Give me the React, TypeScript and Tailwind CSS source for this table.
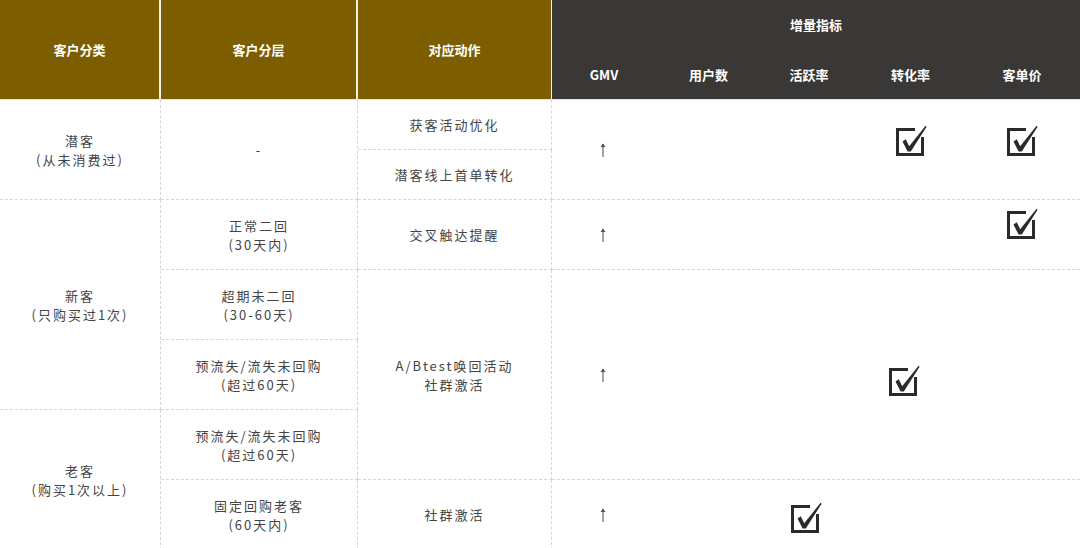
import type { ReactNode } from "react"

const metrics = ["GMV", "用户数", "活跃率", "转化率", "客单价"]

// 每个指标列的宽度，和表头对齐
const metricCols = "grid grid-cols-[104px_105px_96px_107px_116px]"

function CheckBox({ className = "" }: { className?: string }) {
  return (
    <svg width="34" height="34" viewBox="0 0 34 34" className={className}>
      <path d="M21 5.5 H3.5 V30.5 H28.5 V13" fill="none" stroke="#2a2a2a" strokeWidth="3" />
      <polygon
        points="8.5,17.5 11.8,15.3 15.2,22.2 31.6,1.8 32.6,2.8 16.8,27.6 13.6,27.6"
        fill="#2a2a2a"
      />
    </svg>
  )
}

function Up() {
  return (
    <svg width="8" height="16" viewBox="0 0 8 16" className="mr-[3px]">
      <path d="M4 2 V15" stroke="#666" strokeWidth="1.2" />
      <path d="M1.5 5 L4 1.5 L6.5 5 Z" fill="#555" />
    </svg>
  )
}

function Cell({ className = "", children }: { className?: string; children?: ReactNode }) {
  return (
    <div
      className={
        "flex flex-col items-center justify-center border-r border-b border-dashed border-[#d6d6d6] text-center " +
        className
      }
    >
      {children}
    </div>
  )
}

// 指标区的一行（只有横向虚线）
function MetricRow({
  className,
  checks,
  checkClass = "",
}: {
  className: string
  checks: number[]
  checkClass?: string
}) {
  return (
    <div className={"col-[4/-1] border-b border-dashed border-[#d6d6d6] " + metricCols + " " + className}>
      {metrics.map((m, i) => (
        <div key={m} className="flex items-center justify-center">
          {i === 0 && <Up />}
          {checks.includes(i) && <CheckBox className={checkClass} />}
        </div>
      ))}
    </div>
  )
}

export default function App() {
  return (
    <div className="w-[1080px] h-[548px] overflow-hidden bg-white font-['Noto_Sans_CJK_SC','Liberation_Sans',sans-serif]">
      {/* 表头 */}
      <div className="grid grid-cols-[161px_197px_194px_528px] h-[100px] border-b border-[#ece6d8] text-[13px] font-bold text-white">
        <div className="flex items-center justify-center bg-[#7c5e00] border-r-2 border-[#f4f0e6]">客户分类</div>
        <div className="flex items-center justify-center bg-[#7c5e00] border-r-2 border-[#f4f0e6]">客户分层</div>
        <div className="flex items-center justify-center bg-[#7c5e00] border-r border-[#f4f0e6]">对应动作</div>
        <div className="flex flex-col bg-[#3a3836]">
          <div className="flex h-[50px] items-center justify-center">增量指标</div>
          <div className={metricCols + " h-[49px] items-center"}>
            {metrics.map((m) => (
              <div key={m} className="text-center">
                {m}
              </div>
            ))}
          </div>
        </div>
      </div>

      {/* 表体 */}
      <div className="grid grid-cols-[161px_197px_194px_104px_105px_96px_107px_116px] grid-rows-[50px_50px_70px_70px_70px_70px_70px] text-[13px] leading-[19px] tracking-[2px] text-[#444]">
        <Cell className="col-[1] row-[1/3]">
          <div>潜客</div>
          <div>(从未消费过)</div>
        </Cell>
        <Cell className="col-[2] row-[1/3]">-</Cell>
        <Cell className="col-[3] row-[1]">获客活动优化</Cell>
        <Cell className="col-[3] row-[2]">潜客线上首单转化</Cell>
        <MetricRow className="row-[1/3]" checks={[3, 4]} checkClass="mb-[18px]" />

        <Cell className="col-[1] row-[3/6]">
          <div>新客</div>
          <div>(只购买过1次)</div>
        </Cell>
        <Cell className="col-[2] row-[3]">
          <div>正常二回</div>
          <div>(30天内)</div>
        </Cell>
        <Cell className="col-[3] row-[3]">交叉触达提醒</Cell>
        <MetricRow className="row-[3]" checks={[4]} checkClass="mb-[22px]" />

        <Cell className="col-[2] row-[4]">
          <div>超期未二回</div>
          <div>(30-60天)</div>
        </Cell>
        <Cell className="col-[2] row-[5]">
          <div>预流失/流失未回购</div>
          <div>(超过60天)</div>
        </Cell>
        <Cell className="col-[3] row-[4/7]">
          <div>A/Btest唤回活动</div>
          <div>社群激活</div>
        </Cell>
        <MetricRow className="row-[4/7]" checks={[3]} checkClass="mt-[12px] mr-[14px]" />

        <Cell className="col-[1] row-[6/8]">
          <div>老客</div>
          <div>(购买1次以上)</div>
        </Cell>
        <Cell className="col-[2] row-[6]">
          <div>预流失/流失未回购</div>
          <div>(超过60天)</div>
        </Cell>
        <Cell className="col-[2] row-[7]">
          <div>固定回购老客</div>
          <div>(60天内)</div>
        </Cell>
        <Cell className="col-[3] row-[7]">社群激活</Cell>
        <MetricRow className="row-[7]" checks={[2]} checkClass="mt-[6px] mr-[6px]" />
      </div>
    </div>
  )
}
